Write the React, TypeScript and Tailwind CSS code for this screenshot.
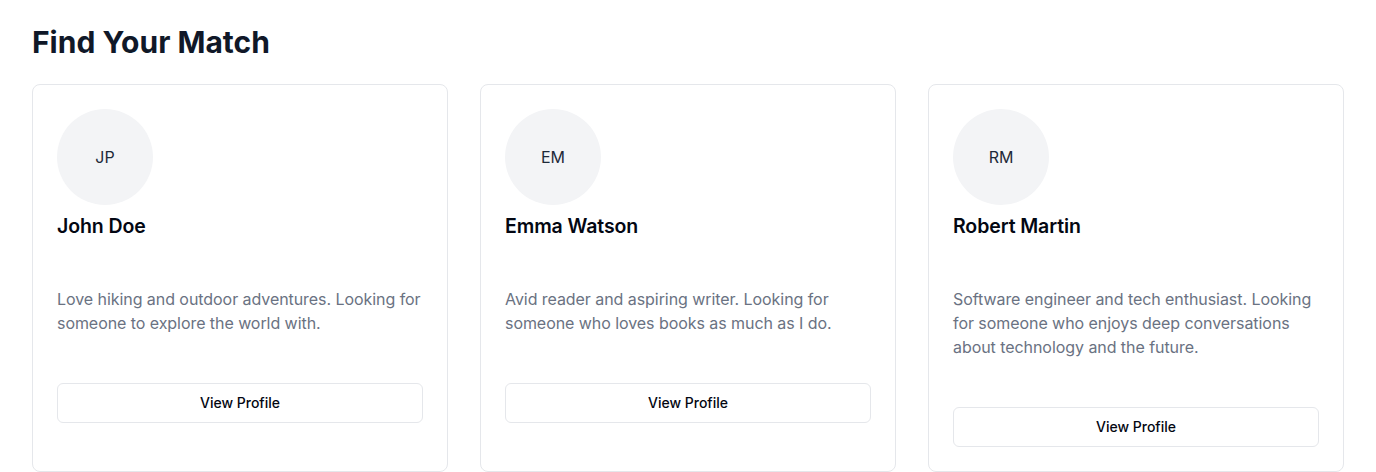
const profiles = [
  {
    initials: "JP",
    name: "John Doe",
    bio: "Love hiking and outdoor adventures. Looking for someone to explore the world with.",
  },
  {
    initials: "EM",
    name: "Emma Watson",
    bio: "Avid reader and aspiring writer. Looking for someone who loves books as much as I do.",
  },
  {
    initials: "RM",
    name: "Robert Martin",
    bio: "Software engineer and tech enthusiast. Looking for someone who enjoys deep conversations about technology and the future.",
  },
];

export default function App() {
  return (
    <div className="min-h-screen bg-white px-8 pt-6 font-['Inter',sans-serif]">
      <h1 className="mb-6 text-3xl leading-9 font-bold text-gray-900">Find Your Match</h1>
      <div className="grid grid-cols-3 gap-8">
        {profiles.map((p) => (
          <div key={p.name} className="flex flex-col rounded-lg border border-gray-200 bg-white p-6">
            <div className="flex h-24 w-24 items-center justify-center rounded-full bg-gray-100 text-base text-gray-800">
              {p.initials}
            </div>
            <h2 className="mt-[7px] mb-[-1px] text-[19.5px] leading-7 font-semibold tracking-[-0.1px] text-gray-950">{p.name}</h2>
            <p className="mt-12 text-base leading-6 tracking-[-0.06px] text-gray-500">{p.bio}</p>
            <button
              type="button"
              className="mt-12 h-10 w-full rounded-md border border-gray-200 bg-white text-sm font-medium text-gray-950"
            >
              View Profile
            </button>
          </div>
        ))}
      </div>
    </div>
  );
}
